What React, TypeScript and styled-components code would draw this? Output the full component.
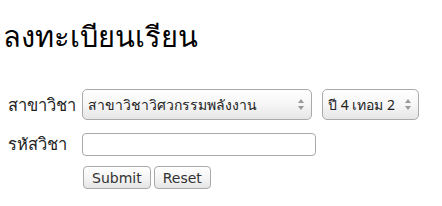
import React from 'react';
import styled, { createGlobalStyle } from 'styled-components';

const GlobalStyle = createGlobalStyle`
  html, body {
    margin: 0;
    background: #ffffff;
  }
  body {
    padding: 0 0 0 3px;
    font-family: "Noto Sans", "DejaVu Sans", sans-serif;
    color: #111;
  }
`;

const Title = styled.h1`
  margin: 16px 0 0 0;
  font-size: 29px;
  font-weight: normal;
  line-height: 40px;
  color: #000;
`;

const Form = styled.form`
  display: flex;
  flex-direction: column;
  margin-top: 33px;
`;

const Row = styled.div<{ $gap?: number }>`
  display: flex;
  align-items: center;
  margin-top: ${(p) => p.$gap ?? 0}px;
`;

const Label = styled.label`
  flex: 0 0 74px;
  white-space: nowrap;
  font-size: 16.5px;
  color: #222;
  padding-left: 5px;
`;

const SelectWrap = styled.div<{ $width: number }>`
  position: relative;
  flex: 0 0 ${(p) => p.$width}px;
  height: 31px;
  margin-right: 10px;
`;

const Select = styled.select`
  appearance: none;
  -webkit-appearance: none;
  width: 100%;
  height: 100%;
  border: 1px solid #aaa;
  border-radius: 5px;
  background: linear-gradient(#ffffff, #f6f6f6 50%, #e6e6e6);
  font-family: "Noto Sans", "DejaVu Sans", sans-serif;
  font-size: 14px;
  color: #222;
  padding: 0 16px 0 5px;
`;

const Arrows = styled.svg`
  position: absolute;
  right: 8px;
  top: 10px;
  pointer-events: none;
`;

const TextInput = styled.input`
  width: 234px;
  height: 23px;
  box-sizing: border-box;
  border: 1px solid #aaa;
  border-radius: 4px;
  background: #fff;
  padding: 0 4px;
`;

const Buttons = styled.div`
  display: flex;
  gap: 3px;
  margin: 9px 0 0 80px;
`;

const Button = styled.button`
  height: 23px;
  border: 1px solid #aaa;
  border-radius: 4px;
  background: linear-gradient(#ffffff, #f3f3f3 60%, #e4e4e4);
  font-family: "DejaVu Sans", sans-serif;
  font-size: 14px;
  color: #333;
  padding: 0 8px;
`;

const ArrowIcon = () => (
  <Arrows width="6" height="11" viewBox="0 0 6 11">
    <path d="M3 0 L6 4 H0 Z" fill="#999" />
    <path d="M3 11 L6 7 H0 Z" fill="#999" />
  </Arrows>
);

export default function App() {
  return (
    <>
      <GlobalStyle />
      <Title>ลงทะเบียนเรียน</Title>
      <Form onSubmit={(e) => e.preventDefault()}>
        <Row>
          <Label>สาขาวิชา</Label>
          <SelectWrap $width={230}>
            <Select defaultValue="energy">
              <option value="energy">สาขาวิชาวิศวกรรมพลังงาน</option>
            </Select>
            <ArrowIcon />
          </SelectWrap>
          <SelectWrap $width={97}>
            <Select defaultValue="4-2">
              <option value="4-2">ปี 4 เทอม 2</option>
            </Select>
            <ArrowIcon />
          </SelectWrap>
        </Row>
        <Row $gap={11}>
          <Label>รหัสวิชา</Label>
          <TextInput type="text" />
        </Row>
        <Buttons>
          <Button type="submit">Submit</Button>
          <Button type="reset">Reset</Button>
        </Buttons>
      </Form>
    </>
  );
}
